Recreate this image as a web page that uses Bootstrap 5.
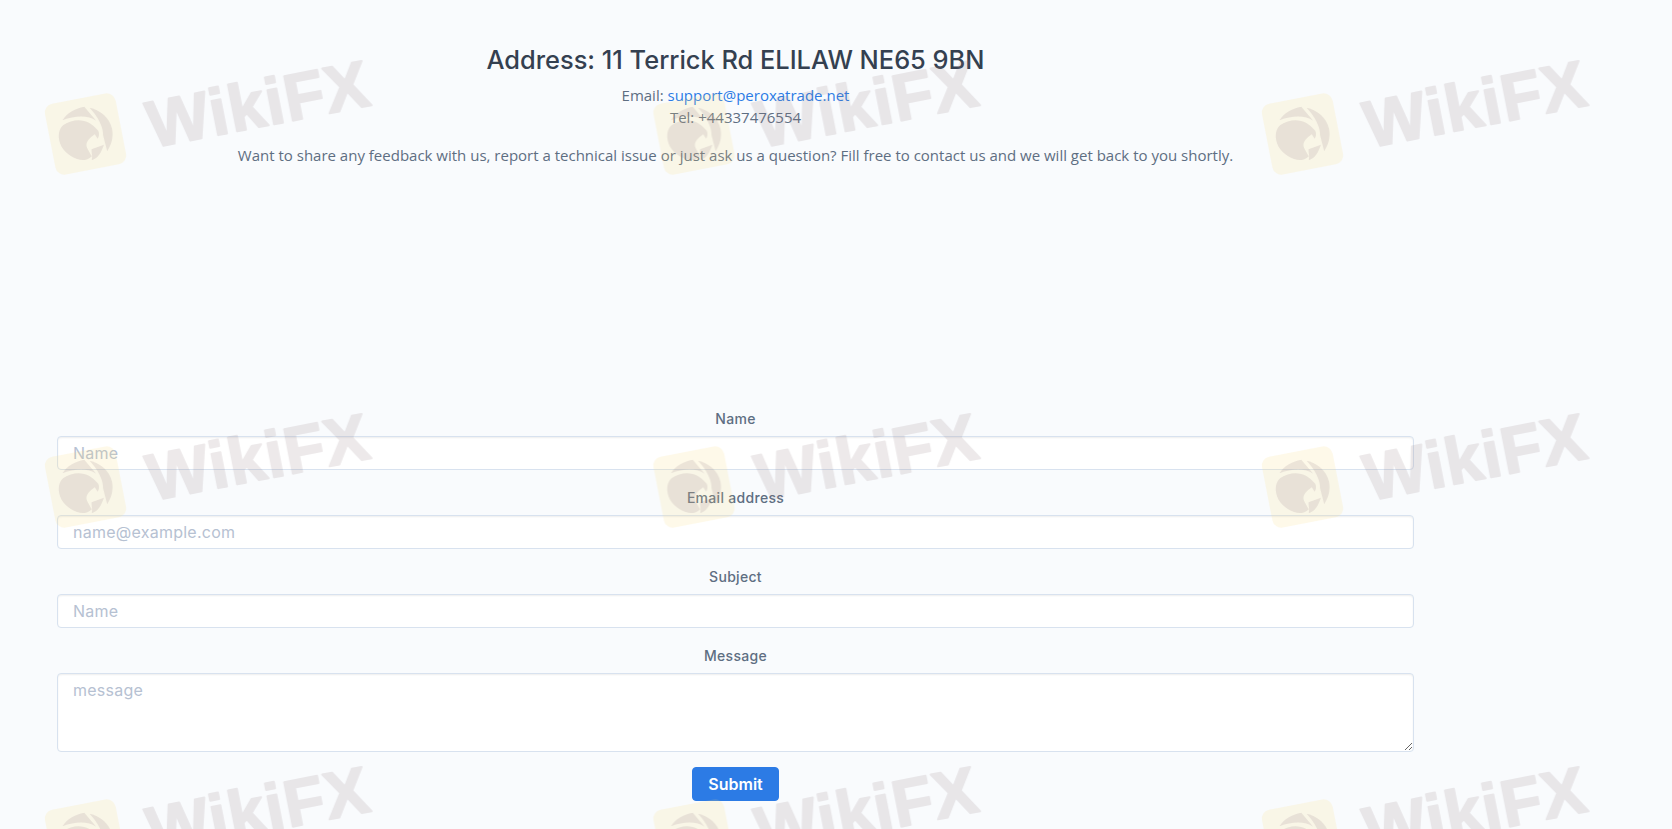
<!doctype html>
<html lang="en">
<head>
<meta charset="utf-8">
<title>Contact</title>
<link href="https://cdn.jsdelivr.net/npm/bootstrap@5.3.0/dist/css/bootstrap.min.css" rel="stylesheet">
<style>
html,body{height:100%}
body{background:#f9fbfd;color:#5e6e82;font-family:"Open Sans","Noto Sans",sans-serif;font-size:15px;line-height:22.4px;overflow:hidden;position:relative}
.page-wrap{padding:42px 258px 0 57px}
.addr-title{font-family:Inter,"Liberation Sans",sans-serif;font-weight:500;font-size:25.4px;line-height:36px;color:#344050;margin-bottom:6px}
.mail-link{color:#2c7be5;text-decoration:none}
.intro-text{margin:15px 0 0}
.map-gap{height:243px}
.field-label{display:block;font-family:Inter,"Liberation Sans",sans-serif;font-weight:500;font-size:14px;letter-spacing:.3px;line-height:20px;color:#5e6e82;text-align:center;margin-bottom:7px}
.field-input{font-family:Inter,"Liberation Sans",sans-serif;font-size:16px;letter-spacing:.25px;line-height:22px;height:34px;padding:5px 15px;border-color:#d8e2ef;border-radius:4px;color:#344050;box-shadow:inset 0 1px 2px rgba(0,0,0,.07)}
.field-input::placeholder{color:#b6c1d2}
textarea.field-input{height:79px;min-height:79px}
.field-row{margin-bottom:18px}
.field-row-last{margin-bottom:15px}
.send-btn{font-family:Inter,"Liberation Sans",sans-serif;font-weight:600;font-size:16px;line-height:22px;width:87px;height:34px;padding:5px 0;background:#2c7be5;border-color:#2c7be5;border-radius:4px;color:#fff}
.wm-layer{position:absolute;inset:0;width:100%;height:100%;pointer-events:none}
.wm-word{font-family:"Liberation Sans",sans-serif;font-weight:700;font-size:66px;letter-spacing:1px;fill:#8c767c;stroke:#8c767c;stroke-width:2;stroke-linejoin:round;opacity:.16}
.wm-badge{fill:#f9dc7a;opacity:.17}
.wm-bird{fill:#8c767c;opacity:.16}
</style>
</head>
<body>
<main class="page-wrap">
  <div class="text-center">
    <h4 class="addr-title">Address: 11 Terrick Rd ELILAW NE65 9BN</h4>
    <div>Email: <a class="mail-link" href="#">support@peroxatrade.net</a></div>
    <div>Tel: +44337476554</div>
    <p class="intro-text">Want to share any feedback with us, report a technical issue or just ask us a question? Fill free to contact us and we will get back to you shortly.</p>
  </div>
  <div class="map-gap"></div>
  <form>
    <div class="field-row"><label class="field-label" for="f1">Name</label><input id="f1" class="form-control field-input" type="text" placeholder="Name"></div>
    <div class="field-row"><label class="field-label" for="f2">Email address</label><input id="f2" class="form-control field-input" type="email" placeholder="name@example.com"></div>
    <div class="field-row"><label class="field-label" for="f3">Subject</label><input id="f3" class="form-control field-input" type="text" placeholder="Name"></div>
    <div class="field-row-last"><label class="field-label" for="f4">Message</label><textarea id="f4" class="form-control field-input" placeholder="message"></textarea></div>
    <div class="text-center"><button class="btn btn-primary send-btn" type="button">Submit</button></div>
  </form>
</main>
<svg class="wm-layer" xmlns="http://www.w3.org/2000/svg" aria-hidden="true">
  <defs>
    <pattern id="wmTile" x="0" y="0" width="608.5" height="353" patternUnits="userSpaceOnUse">
      <g transform="translate(85.5 134) rotate(-11)">
        <rect class="wm-badge" x="-36" y="-36" width="72" height="72" rx="9"/>
        <g class="wm-bird">
          <path d="M-27,1C-27,-6 -24,-11 -20,-13C-13,-16 -5,-16 1,-13C6,-11 10,-6 13,-1C14,2 13,5 11,7L9,2L5,4C0,7 -2,10 -1,14C0,18 1,21 2,23C-3,26 -8,26 -13,23C-21,18 -27,10 -27,1Z"/>
          <path d="M-20,-18C-14,-24 -6,-27 4,-27L13,-11C6,-18 -6,-20 -20,-18Z"/>
          <path d="M9,-25C19,-21 27,-11 27,0C27,9 23,16 18,21L17,5C19,-5 15,-15 9,-25Z"/>
          <path d="M3,16L16,14C12,21 8,26 1,27C3,23 2,20 3,16Z"/>
        </g>
      </g>
      <text class="wm-word" transform="translate(152 148) rotate(-11)" x="0" y="0">WikiFX</text>
    </pattern>
  </defs>
  <rect width="100%" height="100%" fill="url(#wmTile)"/>
</svg>
<script src="https://cdn.jsdelivr.net/npm/bootstrap@5.3.0/dist/js/bootstrap.bundle.min.js"></script>
</body>
</html>
